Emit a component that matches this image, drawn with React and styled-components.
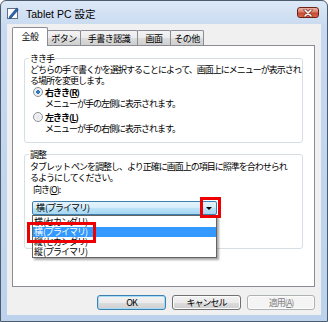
import React from 'react';
import styled, { createGlobalStyle } from 'styled-components';

const GlobalStyle = createGlobalStyle`
  html, body {
    margin: 0;
    padding: 0;
  }

  body {
    width: 328px;
    height: 322px;
    overflow: hidden;
    font-family: "Noto Sans CJK JP", "Noto Sans", sans-serif;
    color: #000;
  }
`;

const Window = styled.div`
  width: 328px;
  height: 322px;
  box-sizing: border-box;
  border: 1px solid #4c5b6d;
  border-radius: 6px 6px 0 0;
  background: linear-gradient(180deg, #dce8f6 0%, #c6d9f0 9%, #bdd2ec 100%);
  display: flex;
  flex-direction: column;
`;

const TitleBar = styled.div`
  height: 23px;
  flex: none;
  display: flex;
  align-items: center;
  gap: 7px;
  padding: 0 8px 0 6px;
`;

const Title = styled.span`
  font-family: "Liberation Sans", "Noto Sans CJK JP", sans-serif;
  font-size: 10.5px;
  line-height: 12px;
  padding-top: 2px;
`;

const CloseButton = styled.div`
  margin-left: auto;
  width: 22px;
  height: 11px;
  box-sizing: border-box;
  border: 1px solid #6e2216;
  border-radius: 3px;
  background: linear-gradient(180deg, #eab1a4 0%, #d8806b 45%, #c4472f 55%, #d9694d 100%);
  display: flex;
  align-items: center;
  justify-content: center;
`;

const Client = styled.div`
  flex: 1;
  margin: 0 6px 6px 6px;
  background: #f0f0f0;
  padding: 3px 6px 5px 5px;
  display: flex;
  flex-direction: column;
`;

const TabRow = styled.div`
  height: 18px;
  display: flex;
  align-items: flex-end;
`;

const Tab = styled.div`
  width: ${p => p.$w}px;
  box-sizing: border-box;
  border: 1px solid #898c95;
  border-bottom: none;
  border-radius: 2px 2px 0 0;
  display: flex;
  align-items: center;
  justify-content: center;
  font-size: 9px;
  letter-spacing: -0.5px;
  margin-left: ${p => (p.$first ? 0 : -1)}px;
  position: relative;
  height: ${p => (p.$active ? 19 : 15)}px;
  margin-bottom: ${p => (p.$active ? -1 : 0)}px;
  padding-bottom: ${p => (p.$active ? 2 : 0)}px;
  z-index: ${p => (p.$active ? 1 : 0)};
  background: ${p =>
    p.$active
      ? '#fff'
      : 'linear-gradient(180deg, #f3f3f3 0%, #ebebeb 50%, #dcdcdc 50%, #cfcfcf 100%)'};
`;

const Panel = styled.div`
  height: 242px;
  flex: none;
  box-sizing: border-box;
  border: 1px solid #898c95;
  background: #fff;
  padding: 7px 11px 0 11px;
  display: flex;
  flex-direction: column;
`;

const GroupBox = styled.fieldset`
  margin: ${p => p.$mt}px 0 0 0;
  padding: 0 5px ${p => p.$pb}px 5px;
  border: 1px solid #d5dfe5;
  border-radius: 3px;
  min-width: 0;
`;

const Legend = styled.legend`
  padding: 0 1px;
  margin-left: -1px;
  font-size: 9px;
  line-height: 11px;
  letter-spacing: -1px;
`;

const Text = styled.p`
  margin: ${p => p.$mt || 0}px 0 0 0;
  padding-left: ${p => p.$indent || 0}px;
  font-size: 9px;
  line-height: ${p => p.$lh || 11}px;
  letter-spacing: -1px;
  white-space: nowrap;
`;

const RadioRow = styled.label`
  display: flex;
  align-items: center;
  gap: 2px;
  height: 12px;
  margin-top: ${p => p.$mt || 0}px;
  padding-left: 3px;
  font-size: 9px;
  font-weight: 700;
  letter-spacing: -1px;
`;

const Radio = styled.span`
  width: 10px;
  height: 10px;
  box-sizing: border-box;
  border-radius: 50%;
  border: 1px solid #8a8f95;
  background: ${p =>
    p.$checked
      ? 'radial-gradient(circle, #3d8fd0 0%, #2a6fb0 30%, #e8edf2 36%, #f6f6f6 100%)'
      : 'radial-gradient(circle, #e4e6e8 0%, #fafafa 100%)'};
`;

const Combo = styled.div`
  position: relative;
  margin: 5px 0 0 2px;
  width: 185px;
  height: 14px;
  box-sizing: border-box;
  border: 1px solid #3c7fb1;
  border-radius: 2px;
  background: linear-gradient(180deg, #e6f4fc 0%, #d4edfb 50%, #bde3f8 50%, #a6d6f2 100%);
  display: flex;
  align-items: center;
  font-size: 9px;
  letter-spacing: -1px;
`;

const ComboValue = styled.span`
  padding-left: 3px;
  line-height: 12px;
`;

const ComboArrow = styled.span`
  margin-left: auto;
  width: 15px;
  height: 100%;
  border-left: 1px solid #6fa6cc;
  display: flex;
  align-items: center;
  justify-content: center;

  &::after {
    content: '';
    border-left: 3px solid transparent;
    border-right: 3px solid transparent;
    border-top: 3px solid #000;
  }
`;

const DropList = styled.div`
  position: absolute;
  left: -1px;
  top: 13px;
  width: 185px;
  box-sizing: border-box;
  border: 1px solid #646464;
  background: #fff;
  padding-top: 1px;
  box-shadow: 2px 2px 2px rgba(0, 0, 0, 0.35);
  z-index: 2;
`;

const ListItem = styled.div`
  height: 10px;
  line-height: 10px;
  padding-left: 1px;
  white-space: nowrap;
  background: ${p => (p.$selected ? '#3399ff' : 'transparent')};
  color: ${p => (p.$selected ? '#fff' : '#000')};
`;

const Mark = styled.span`
  position: absolute;
  left: ${p => p.$x}px;
  top: ${p => p.$y}px;
  width: ${p => p.$w}px;
  height: ${p => p.$h}px;
  box-sizing: border-box;
  border: 3px solid #ee0000;
  z-index: 3;
  pointer-events: none;
`;

const ButtonRow = styled.div`
  margin-top: 8px;
  display: flex;
  justify-content: flex-end;
  gap: 6px;
`;

const Button = styled.div`
  width: ${p => p.$w}px;
  height: 15px;
  box-sizing: border-box;
  border-radius: 3px;
  border: 1px solid ${p => (p.$default ? '#3c7fb1' : p.$disabled ? '#adb2b5' : '#707070')};
  background: ${p =>
    p.$disabled
      ? '#f4f4f4'
      : 'linear-gradient(180deg, #f2f2f2 0%, #ebebeb 50%, #dddddd 50%, #cfcfcf 100%)'};
  box-shadow: ${p => (p.$default ? 'inset 0 0 0 1px #a6dcf6' : 'inset 0 0 0 1px #fcfcfc')};
  color: ${p => (p.$disabled ? '#838383' : '#000')};
  display: flex;
  align-items: center;
  justify-content: center;
  font-size: 9px;
  letter-spacing: -1px;
`;

const TitleIcon = () => (
  <svg width="12" height="12" viewBox="0 0 12 12">
    <rect x="0.5" y="1.5" width="10" height="10" fill="#fdfdfd" stroke="#5b6f8a" />
    <path d="M2.5 9.5 L9.5 1.2 L11.3 2.8 L4.2 11 L2 11.6 Z" fill="#2f64b0" stroke="#183c70" strokeWidth="0.6" />
  </svg>
);

const CloseGlyph = () => (
  <svg width="10" height="8" viewBox="0 0 10 8">
    <path d="M2 1 L8 7 M8 1 L2 7" stroke="#7a2a1e" strokeWidth="3" strokeLinecap="round" />
    <path d="M2 1 L8 7 M8 1 L2 7" stroke="#fff" strokeWidth="1.6" strokeLinecap="round" />
  </svg>
);

const tabs = [
  { label: '全般', w: 36, active: true },
  { label: 'ボタン', w: 34 },
  { label: '手書き認識', w: 58 },
  { label: '画面', w: 34 },
  { label: 'その他', w: 34 },
];

const orientations = ['横 (セカンダリ)', '横 (プライマリ)', '縦 (セカンダリ)', '縦 (プライマリ)'];

const App = () => {
  return (
    <>
      <GlobalStyle />
      <Window>
        <TitleBar>
          <TitleIcon />
          <Title>Tablet PC 設定</Title>
          <CloseButton>
            <CloseGlyph />
          </CloseButton>
        </TitleBar>

        <Client>
          <TabRow>
            {tabs.map((t, i) => (
              <Tab key={t.label} $w={t.w} $active={t.active} $first={i === 0}>
                {t.label}
              </Tab>
            ))}
          </TabRow>

          <Panel>
            <GroupBox $mt={0} $pb={8}>
              <Legend>きき手</Legend>
              <Text>
                どちらの手で書くかを選択することによって、画面上にメニューが表示され
                <br />
                る場所を変更します。
              </Text>
              <RadioRow>
                <Radio $checked />
                <span>右きき(<u>R</u>)</span>
              </RadioRow>
              <Text $indent={15}>メニューが手の左側に表示されます。</Text>
              <RadioRow $mt={2}>
                <Radio />
                <span>左きき(<u>L</u>)</span>
              </RadioRow>
              <Text $indent={15}>メニューが手の右側に表示されます。</Text>
            </GroupBox>

            <GroupBox $mt={6} $pb={33}>
              <Legend>調整</Legend>
              <Text $mt={1}>
                タブレット ペンを調整し、より正確に画面上の項目に照準を合わせられ
                <br />
                るようにしてください。
              </Text>
              <Text $mt={1} $lh={12} $indent={3}>
                向き(<u>O</u>):
              </Text>
              <Combo>
                <ComboValue>横 (プライマリ)</ComboValue>
                <ComboArrow />
                <Mark $x={167} $y={-5} $w={21} $h={21} />
                <DropList>
                  {orientations.map((o, i) => (
                    <ListItem key={o} $selected={i === 1}>
                      {o}
                    </ListItem>
                  ))}
                  <Mark $x={-6} $y={6} $w={69} $h={21} />
                </DropList>
              </Combo>
            </GroupBox>
          </Panel>

          <ButtonRow>
            <Button $w={69} $default>OK</Button>
            <Button $w={69}>キャンセル</Button>
            <Button $w={68} $disabled>
              適用(<u>A</u>)
            </Button>
          </ButtonRow>
        </Client>
      </Window>
    </>
  );
};

export default App;
